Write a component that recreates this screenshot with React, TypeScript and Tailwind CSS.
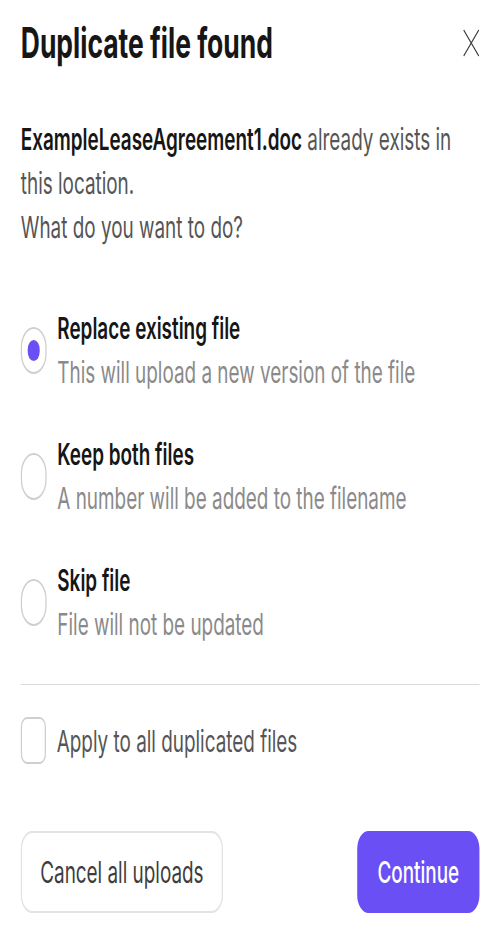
import React, { useState } from "react";

type Choice = "replace" | "keep" | "skip";

const options: { id: Choice; title: string; hint: string }[] = [
  { id: "replace", title: "Replace existing file", hint: "This will upload a new version of the file" },
  { id: "keep", title: "Keep both files", hint: "A number will be added to the filename" },
  { id: "skip", title: "Skip file", hint: "File will not be updated" },
];

export default function App() {
  const [choice, setChoice] = useState<Choice>("replace");
  const [applyAll, setApplyAll] = useState(false);

  return (
    <div className="w-[500px] min-h-[941px] overflow-hidden bg-white">
      {/* the capture is squeezed sideways, so the dialog is laid out wide and scaled on x */}
      <div className="w-[794px] origin-top-left scale-x-[0.63] px-[33px] pt-[18px] font-['Inter','Noto_Sans',sans-serif]">
        {/* Header */}
        <div className="flex items-center justify-between">
          <h2 className="text-[42px] leading-[50px] font-bold text-[#161616]">Duplicate file found</h2>
          <button className="text-[#3a3a3a]">
            <svg width="26" height="28" viewBox="0 0 26 28" fill="none" stroke="currentColor" strokeWidth="1.6">
              <path d="M1 1 L25 27 M25 1 L1 27" />
            </svg>
          </button>
        </div>

        {/* Message */}
        <p className="mt-[49px] text-[30px] leading-[44px] text-[#555]">
          <span className="font-semibold text-[#161616]">ExampleLeaseAgreement1.doc</span> already exists in
          <br />
          this location.
          <br />
          What do you want to do?
        </p>

        {/* Options */}
        <div className="mt-[57px] flex flex-col gap-[38px]">
          {options.map((o) => (
            <label key={o.id} className="flex items-center gap-[17px] cursor-pointer" onClick={() => setChoice(o.id)}>
              <span className="flex h-[47px] w-[41px] shrink-0 items-center justify-center rounded-full border-2 border-[#cfcfcf]">
                {choice === o.id && <span className="h-[21px] w-[19px] rounded-full bg-[#6a4ff5]" />}
              </span>
              <span className="flex flex-col text-[30px] leading-[44px]">
                <span className="font-semibold text-[#161616]">{o.title}</span>
                <span className="text-[#8a8a8a]">{o.hint}</span>
              </span>
            </label>
          ))}
        </div>

        <div className="mt-[38px] h-px bg-[#d9d9d9]" />

        {/* Apply to all */}
        <label className="mt-[32px] flex items-center gap-[17px] cursor-pointer" onClick={() => setApplyAll(!applyAll)}>
          <span
            className={
              applyAll
                ? "h-[47px] w-[40px] shrink-0 rounded-[10px] border-2 border-[#6a4ff5] bg-[#6a4ff5]"
                : "h-[47px] w-[40px] shrink-0 rounded-[10px] border-2 border-[#cfcfcf]"
            }
          />
          <span className="text-[30px] leading-[44px] text-[#555]">Apply to all duplicated files</span>
        </label>

        {/* Actions */}
        <div className="mt-[67px] flex items-center justify-between">
          <button className="h-[82px] w-[321px] rounded-[18px] border-2 border-[#e3e3e3] bg-white text-[30px] text-[#3d3d3d]">
            Cancel all uploads
          </button>
          <button className="h-[82px] w-[194px] rounded-[18px] bg-[#6a4ff5] text-[30px] font-medium text-white">
            Continue
          </button>
        </div>
      </div>
    </div>
  );
}
